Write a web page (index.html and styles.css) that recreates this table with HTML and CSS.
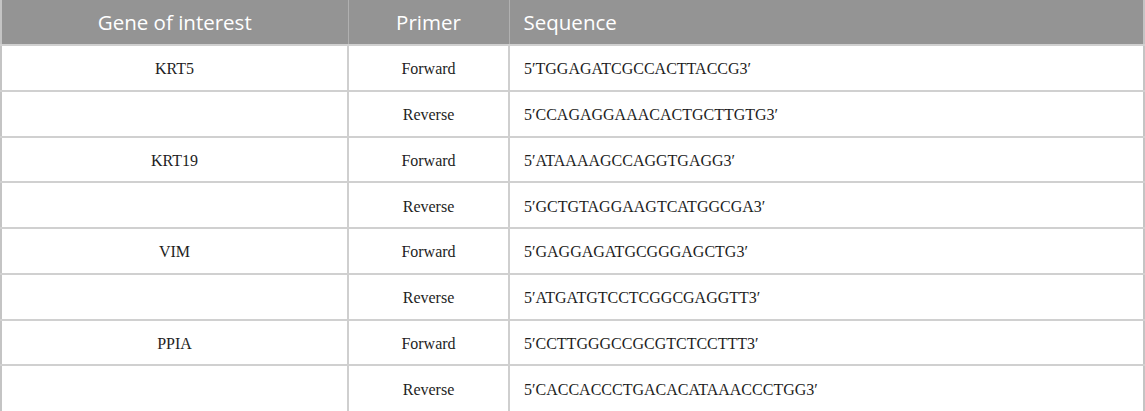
FILE: index.html
```html
<!DOCTYPE html>
<html>
<head>
<meta charset="utf-8">
<link rel="stylesheet" href="styles.css">
</head>
<body>
<table class="primers">
  <thead>
    <tr>
      <th class="c-gene">Gene of interest</th>
      <th class="c-primer">Primer</th>
      <th class="c-seq">Sequence</th>
    </tr>
  </thead>
  <tbody>
    <tr><td class="c-gene">KRT5</td><td class="c-primer">Forward</td><td class="c-seq">5′TGGAGATCGCCACTTACCG3′</td></tr>
    <tr><td class="c-gene"></td><td class="c-primer">Reverse</td><td class="c-seq">5′CCAGAGGAAACACTGCTTGTG3′</td></tr>
    <tr><td class="c-gene">KRT19</td><td class="c-primer">Forward</td><td class="c-seq">5′ATAAAAGCCAGGTGAGG3′</td></tr>
    <tr><td class="c-gene"></td><td class="c-primer">Reverse</td><td class="c-seq">5′GCTGTAGGAAGTCATGGCGA3′</td></tr>
    <tr><td class="c-gene">VIM</td><td class="c-primer">Forward</td><td class="c-seq">5′GAGGAGATGCGGGAGCTG3′</td></tr>
    <tr><td class="c-gene"></td><td class="c-primer">Reverse</td><td class="c-seq">5′ATGATGTCCTCGGCGAGGTT3′</td></tr>
    <tr><td class="c-gene">PPIA</td><td class="c-primer">Forward</td><td class="c-seq">5′CCTTGGGCCGCGTCTCCTTT3′</td></tr>
    <tr><td class="c-gene"></td><td class="c-primer">Reverse</td><td class="c-seq">5′CACCACCCTGACACATAAACCCTGG3′</td></tr>
  </tbody>
</table>
</body>
</html>
```
FILE: styles.css
```css
html, body {
  margin: 0;
  padding: 0;
  background: #ffffff;
}
.primers {
  width: 1145px;
  border-collapse: collapse;
  table-layout: fixed;
  border-left: 2px solid #c4c4c4;
  border-right: 2px solid #c4c4c4;
  border-bottom: 1px solid #e4e4e4;
}
.primers th {
  background: #949494;
  color: #ffffff;
  font-family: "Open Sans", "Noto Sans", sans-serif;
  font-weight: 400;
  font-size: 20.5px;
  height: 45px;
  padding: 0 14px;
  box-sizing: border-box;
  border-left: 1px solid #b0b0b0;
  vertical-align: middle;
}
.primers td {
  font-family: "Liberation Serif", serif;
  font-size: 16px;
  color: #1e1e1e;
  height: 45.75px;
  padding: 3px 14px 0;
  box-sizing: border-box;
  border-top: 2px solid #d0d0d0;
  border-left: 2px solid #cfcfcf;
  vertical-align: middle;
}
.primers th:first-child, .primers td:first-child { border-left: none; }
.c-gene { width: 347px; text-align: center; }
.c-primer { width: 161px; text-align: center; }
.c-seq { text-align: left; }
```
